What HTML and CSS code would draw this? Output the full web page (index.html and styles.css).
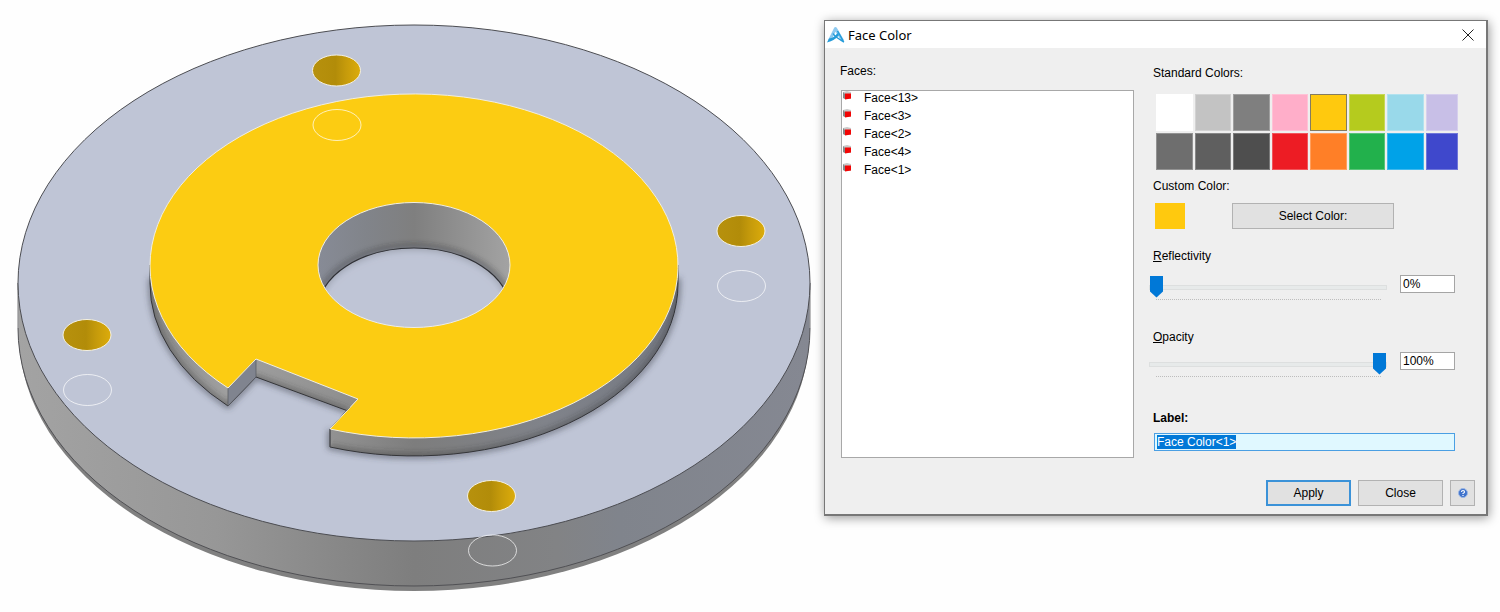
FILE: index.html
```html
<!DOCTYPE html>
<html lang="en">
<head>
<meta charset="utf-8">
<title>Face Color</title>
<link rel="stylesheet" href="styles.css">
</head>
<body>
<main class="workspace">
  <svg class="model" viewBox="0 0 824 612" role="img" aria-label="Flange model with yellow faces">
    <defs>
      <linearGradient id="rim" gradientUnits="userSpaceOnUse" x1="18" y1="0" x2="810" y2="0">
        <stop offset="0" stop-color="#a3a3a3"/><stop offset=".25" stop-color="#979797"/><stop offset=".5" stop-color="#7e7e7e"/><stop offset=".68" stop-color="#828385"/><stop offset=".76" stop-color="#80848c"/><stop offset="1" stop-color="#858892"/>
      </linearGradient>
      <linearGradient id="boss" gradientUnits="userSpaceOnUse" x1="150" y1="0" x2="678" y2="0">
        <stop offset="0" stop-color="#8b8b8b"/><stop offset=".15" stop-color="#a0a0a0"/><stop offset=".35" stop-color="#919191"/><stop offset=".5" stop-color="#7d7d7d"/><stop offset=".75" stop-color="#80838a"/><stop offset="1" stop-color="#747882"/>
      </linearGradient>
      <linearGradient id="bore" gradientUnits="userSpaceOnUse" x1="318" y1="0" x2="510" y2="0">
        <stop offset="0" stop-color="#878b96"/><stop offset=".25" stop-color="#81848a"/><stop offset=".5" stop-color="#7f7f7f"/><stop offset="1" stop-color="#a3a3a3"/>
      </linearGradient>
      <linearGradient id="gold" x1="0" y1="0" x2="1" y2="0">
        <stop offset="0" stop-color="#b7910d"/><stop offset=".48" stop-color="#b28c09"/><stop offset=".7" stop-color="#c69b0b"/><stop offset="1" stop-color="#dcac0b"/>
      </linearGradient>
      <filter id="soft" x="-10%" y="-10%" width="120%" height="120%"><feGaussianBlur stdDeviation="3"/></filter>
      <clipPath id="boreClip"><ellipse cx="414" cy="265" rx="96" ry="62.5"/></clipPath>
      <clipPath id="plateClip"><ellipse cx="414" cy="283" rx="396" ry="258"/></clipPath>
      <clipPath id="bossClip"><path d="M150 265V283A264 172 0 0 0 228 406L256 377L348 411L330 447A264 172 0 0 0 678 283V265Z"/></clipPath>
    </defs>
    <path fill="#808080" d="M19 325V334A395 257 0 0 0 809 334V325Z"/>
    <path fill="url(#rim)" stroke="#505054" d="M18 283V328A396 258 0 0 0 810 328V283Z"/>
    <path fill="none" stroke="#fefefe" stroke-opacity=".5" d="M18 290V328M810 290V328"/>
    <ellipse cx="414" cy="283" rx="396" ry="258" fill="#bfc5d6" stroke="#4c4d52"/>
    <g clip-path="url(#plateClip)">
      <path filter="url(#soft)" fill="none" stroke="#3c404b" stroke-opacity=".75" stroke-width="4" d="M151 278V283A264 172 0 0 0 228 406L256 377L348 411M330 430V447A264 172 0 0 0 678 283V278"/>
    </g>
    <path fill="url(#boss)" stroke="#35363a" d="M150 265V283A264 172 0 0 0 228 406L256 377L348 411L350 407L330 429V447A264 172 0 0 0 678 283V265Z"/>
    <g clip-path="url(#bossClip)">
      <path filter="url(#soft)" fill="none" stroke="#303030" stroke-opacity=".6" stroke-width="4" d="M150 283A264 172 0 0 0 228 406L256 377L348 411M330 447A264 172 0 0 0 678 283"/>
    </g>
    <path fill="#80848f" stroke="#55565b" stroke-width=".7" d="M228 388L256 359V377L228 406Z"/>
    <path fill="#fccc12" stroke="#f1eee0" d="M228 388A264 172 0 1 1 330 429L358 399L256 359Z"/>
    <path fill="none" stroke="#55565b" stroke-width=".8" d="M330 429V447"/>
    <g clip-path="url(#boreClip)">
      <rect x="318" y="202" width="192" height="127" fill="url(#bore)"/>
      <ellipse cx="414" cy="310" rx="96" ry="62" fill="#bfc5d6" stroke="#222" stroke-width="5" stroke-opacity=".75" filter="url(#soft)"/>
      <ellipse cx="414" cy="310" rx="96" ry="62" fill="#bfc5d6" fill-opacity=".65" stroke="#303136" stroke-width="1.2"/>
      <ellipse cx="414" cy="316" rx="92" ry="60" fill="#bfc5d6" fill-opacity=".6"/>
    </g>
    <ellipse cx="414" cy="265" rx="96" ry="62.5" fill="none" stroke="#f1eee0"/>
    <g fill="url(#gold)" stroke="#f4f1e4">
      <ellipse cx="336.500" cy="70.500" rx="24" ry="15.500"/>
      <ellipse cx="741" cy="231" rx="24" ry="15.500"/>
      <ellipse cx="87" cy="335" rx="24" ry="15.500"/>
      <ellipse cx="491.500" cy="496" rx="24" ry="15.500"/>
    </g>
    <g fill="none" stroke="#fff" stroke-opacity=".7">
      <ellipse cx="337" cy="125" rx="24" ry="15.500"/>
      <ellipse cx="741.500" cy="286" rx="24" ry="15.500"/>
      <ellipse cx="87.500" cy="390" rx="24" ry="15.500"/>
      <ellipse cx="492.500" cy="550.500" rx="24" ry="15.500"/>
    </g>
  </svg>

  <section class="dialog" role="dialog" aria-labelledby="dialog-title">
    <header class="titlebar">
      <svg class="logo" viewBox="0 0 18 17" aria-hidden="true">
        <path fill="none" stroke="#8ecaf0" stroke-width="3" stroke-linejoin="round" d="M2.500 14.500L8.500 2.500L15.500 14.500"/>
        <path fill="#249bd9" d="M0 16.500L2 12.500Q7 12 10.500 7L12 9Q8 14.500 0 16.500Z"/>
        <path fill="none" stroke="#249bd9" stroke-width="1.500" d="M6 7.500Q8 11 17 16M10.500 5L16.500 15.500"/>
      </svg>
      <h1 class="title" id="dialog-title">Face Color</h1>
      <button class="close-x" aria-label="Close window"><svg viewBox="0 0 12 12"><path d="M.5.5L11.500 11.500M11.500.5L.5 11.500"/></svg></button>
    </header>

    <div class="content">
      <div class="faces">
        <h2 class="caption" id="faces-title">Faces:</h2>
        <ul class="face-list" aria-labelledby="faces-title">
          <li class="face"><svg class="cube" viewBox="0 0 9 10"><path fill="#c9c9c9" d="M0 1L4 0L8 1V8L2 8L0 7Z"/><path fill="#888" d="M0 1L2 3V8L0 7Z"/><path fill="#f20505" d="M2 2.500H8V7.500L2 8.500Z"/></svg>Face&lt;13&gt;</li>
          <li class="face"><svg class="cube" viewBox="0 0 9 10"><path fill="#c9c9c9" d="M0 1L4 0L8 1V8L2 8L0 7Z"/><path fill="#888" d="M0 1L2 3V8L0 7Z"/><path fill="#f20505" d="M2 2.500H8V7.500L2 8.500Z"/></svg>Face&lt;3&gt;</li>
          <li class="face"><svg class="cube" viewBox="0 0 9 10"><path fill="#c9c9c9" d="M0 1L4 0L8 1V8L2 8L0 7Z"/><path fill="#888" d="M0 1L2 3V8L0 7Z"/><path fill="#f20505" d="M2 2.500H8V7.500L2 8.500Z"/></svg>Face&lt;2&gt;</li>
          <li class="face"><svg class="cube" viewBox="0 0 9 10"><path fill="#c9c9c9" d="M0 1L4 0L8 1V8L2 8L0 7Z"/><path fill="#888" d="M0 1L2 3V8L0 7Z"/><path fill="#f20505" d="M2 2.500H8V7.500L2 8.500Z"/></svg>Face&lt;4&gt;</li>
          <li class="face"><svg class="cube" viewBox="0 0 9 10"><path fill="#c9c9c9" d="M0 1L4 0L8 1V8L2 8L0 7Z"/><path fill="#888" d="M0 1L2 3V8L0 7Z"/><path fill="#f20505" d="M2 2.500H8V7.500L2 8.500Z"/></svg>Face&lt;1&gt;</li>
        </ul>
      </div>

      <div class="options">
        <h2 class="caption">Standard Colors:</h2>
        <div class="palette">
          <button class="swatch white" aria-label="White"></button>
          <button class="swatch silver" aria-label="Light gray"></button>
          <button class="swatch gray" aria-label="Gray"></button>
          <button class="swatch pink" aria-label="Pink"></button>
          <button class="swatch gold selected" aria-label="Gold" aria-pressed="true"></button>
          <button class="swatch lime" aria-label="Lime"></button>
          <button class="swatch sky" aria-label="Light blue"></button>
          <button class="swatch lavender" aria-label="Lavender"></button>
          <button class="swatch iron" aria-label="Iron"></button>
          <button class="swatch slate" aria-label="Slate"></button>
          <button class="swatch coal" aria-label="Charcoal"></button>
          <button class="swatch red" aria-label="Red"></button>
          <button class="swatch orange" aria-label="Orange"></button>
          <button class="swatch green" aria-label="Green"></button>
          <button class="swatch blue" aria-label="Blue"></button>
          <button class="swatch indigo" aria-label="Indigo"></button>
        </div>
        <h2 class="caption custom-caption">Custom Color:</h2>
        <div class="custom">
          <span class="custom-chip gold"></span>
          <button class="button select-color">Select Color:</button>
        </div>

        <label class="caption slider-caption" for="reflectivity"><u>R</u>eflectivity</label>
        <div class="slider-row">
          <div class="track">
            <input class="slider" id="reflectivity" type="range" min="0" max="100" value="0">
            <div class="ticks"></div>
          </div>
          <input class="percent" type="text" value="0%" aria-label="Reflectivity percent">
        </div>

        <label class="caption opacity-caption" for="opacity"><u>O</u>pacity</label>
        <div class="slider-row opacity-row">
          <div class="track">
            <input class="slider" id="opacity" type="range" min="0" max="100" value="100">
            <div class="ticks"></div>
          </div>
          <input class="percent" type="text" value="100%" aria-label="Opacity percent">
        </div>

        <label class="caption name-caption" for="label">Label:</label>
        <input class="name" id="label" type="text" value="Face Color&lt;1&gt;">
      </div>
    </div>

    <footer class="actions">
      <button class="button action primary">Apply</button>
      <button class="button action">Close</button>
      <button class="button help" aria-label="Help"><svg viewBox="0 0 10 10"><circle cx="5" cy="5" r="4.500" fill="#3f73cc" stroke="#9db7e3"/><path d="M3.500 4Q3.500 2.500 5 2.500T6.500 4Q6.500 4.700 5 5.500V6M5 7V8" fill="none" stroke="#fff" stroke-width="1.200"/></svg></button>
    </footer>
  </section>
</main>
<script src="script.js"></script>
</body>
</html>
```
FILE: styles.css
```css
* { box-sizing: border-box; }

body {
  margin: 0;
  background: #fefefe;
  color: #000;
  font: 12px/16px "Liberation Sans", Arial, sans-serif;
}

.workspace {
  display: flex;
  align-items: flex-start;
  padding-right: 12px;
}

.model {
  display: block;
  flex: 824 1 0;
  min-width: 0;
}

.dialog {
  flex: 661 1 0;
  min-width: 0;
  margin-top: 20px;
  background: #efefef;
  border: 1px solid #777;
  border-right-width: 2px;
  border-bottom-width: 2px;
  box-shadow: 1px 2px 10px rgba(0, 0, 0, .4);
}

button, input { margin: 0; padding: 0; font: inherit; color: inherit; }

.titlebar {
  display: flex;
  align-items: center;
  gap: 3px;
  height: 27px;
  padding: 0 12px 0 2px;
  background: #fff;
}

.logo { width: 18px; height: 17px; }

.title {
  flex: 1;
  margin: 0;
  font: 13px/18px "Noto Sans", sans-serif;
}

.close-x {
  width: 12px;
  height: 12px;
  border: 0;
  background: none;
}

.close-x svg { display: block; fill: none; stroke: #222; }

.content {
  display: flex;
  gap: 15px;
  padding: 15px 28px 0 15px;
}

.faces {
  flex: 294 1 0;
  display: flex;
  flex-direction: column;
}

.options { flex: 309 1 0; padding-top: 2px; }

.caption {
  display: block;
  margin: 0;
  font-size: 12px;
  font-weight: 400;
  line-height: 16px;
}

.options .caption { padding-left: 4px; }

.face-list {
  flex: 1;
  display: flex;
  flex-direction: column;
  gap: 4px;
  min-height: 368px;
  margin: 11px 0 0 1px;
  padding: 0;
  list-style: none;
  background: #fff;
  border: 1px solid #a8a8a8;
}

.face {
  display: flex;
  gap: 12px;
  padding-left: 1px;
  line-height: 14px;
}

.cube { width: 9px; height: 10px; }

.palette {
  display: grid;
  grid-template-columns: repeat(7, 36fr) 32fr;
  gap: 2px;
  margin: 13px 0 0 7px;
}

.swatch { height: 37px; border: 1px solid rgba(255, 255, 255, .25); }
.swatch.selected { border-color: #857c60; }

.white { background-color: #fff; }
.silver { background-color: #c3c3c3; }
.gray { background-color: #7f7f7f; }
.pink { background-color: #ffaec9; }
.gold { background-color: #ffc90e; }
.lime { background-color: #b5cb1e; }
.sky { background-color: #99d9ea; }
.lavender { background-color: #c8bfe7; }
.iron { background-color: #6e6e6e; }
.slate { background-color: #5f5f5f; }
.coal { background-color: #4e4e4e; }
.red { background-color: #ed1c24; }
.orange { background-color: #ff7f27; }
.green { background-color: #22b14c; }
.blue { background-color: #00a2e8; }
.indigo { background-color: #3f48cc; }

.custom-caption { margin-top: 8px; }

.custom {
  display: flex;
  gap: 47px;
  margin-top: 9px;
  padding-left: 6px;
}

.custom-chip { width: 30px; height: 26px; }

.button {
  background: #e1e1e1;
  border: 1px solid #b2b2b2;
  text-align: center;
}

.select-color { width: 162px; height: 26px; }

.slider-caption { margin-top: 19px; }

.slider-row {
  display: flex;
  align-items: flex-start;
  gap: 13px;
  margin-top: 11px;
  padding-right: 3px;
}

.track { flex: 1; }

.slider {
  display: block;
  width: 100%;
  height: 24px;
  appearance: none;
  background: none;
}

.slider::-webkit-slider-runnable-track {
  height: 5px;
  background: #e7eaea;
  border: 1px solid #dddfdf;
}

.slider::-webkit-slider-thumb {
  appearance: none;
  width: 13px;
  height: 22px;
  margin-top: -10px;
  background: #0078d7;
  clip-path: polygon(0 0, 100% 0, 100% 73%, 50% 100%, 0 73%);
}

.ticks {
  height: 1px;
  margin: 0 5px 0 7px;
  background: repeating-linear-gradient(90deg, #bdbdbd 0 1px, transparent 1px 2px);
}

.percent {
  width: 55px;
  height: 18px;
  padding: 0 2px;
  border: 1px solid #a5a5a5;
  background: #fff;
}

.opacity-caption { margin-top: 29px; }
.opacity-row { margin-top: 7px; }

.name-caption { margin-top: 33px; font-weight: 700; }

.name {
  display: block;
  width: calc(100% - 8px);
  height: 18px;
  margin: 7px 0 0 5px;
  padding: 0 2px;
  line-height: 14px;
  border: 1px solid #4a9fe3;
  background: #e0f8ff;
  outline: 0;
}

.name::selection { background: #0078d7; color: #fff; }

.actions {
  display: flex;
  justify-content: flex-end;
  gap: 7px;
  padding: 22px 11px 8px;
}

.action { width: 85px; height: 26px; }
.primary { border: 2px solid #3b92d8; }

.help {
  display: flex;
  align-items: center;
  justify-content: center;
  width: 25px;
  height: 26px;
}

.help svg { width: 10px; height: 10px; }
```
FILE: script.js
```js
document.getElementById("label").select();
```
